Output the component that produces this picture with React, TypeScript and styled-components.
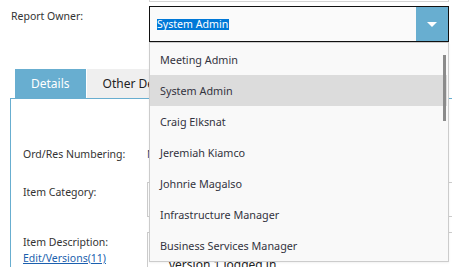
import styled, { createGlobalStyle } from 'styled-components';

const GlobalStyle = createGlobalStyle`
  html, body {
    margin: 0;
    padding: 0;
    overflow: hidden;
    background: #ffffff;
  }

  body {
    font-family: 'Noto Sans', 'Liberation Sans', sans-serif;
    font-size: 11px;
    color: #333333;
  }
`;

const owners = [
  'Meeting Admin',
  'System Admin',
  'Craig Elksnat',
  'Jeremiah Kiamco',
  'Johnrie Magalso',
  'Infrastructure Manager',
  'Business Services Manager',
];

const tabs = ['Details', 'Other Details', 'Attachments', 'History'];

const App = () => {
  const selected = 'System Admin';

  return (
    <St.Page>
      <GlobalStyle />
      <St.Header>
        <St.FieldLabel>Report Owner:</St.FieldLabel>
        <St.SelectColumn>
          <St.PrevEdge />
          <St.Select>
            <St.SelectValue>
              <span>{selected}</span>
            </St.SelectValue>
            <St.ArrowButton type="button" aria-label="open" />
            <St.OptionList>
              {owners.map((name) => (
                <St.Option key={name} $active={name === selected}>
                  {name}
                </St.Option>
              ))}
              <St.ScrollThumb />
            </St.OptionList>
          </St.Select>
        </St.SelectColumn>
      </St.Header>

      <St.TabBar>
        {tabs.map((tab, i) => (
          <St.Tab key={tab} $active={i === 0}>
            {tab}
          </St.Tab>
        ))}
      </St.TabBar>

      <St.Panel>
        <St.FormGrid>
          <St.RowLabel>Ord/Res Numbering:</St.RowLabel>
          <St.PlainValue>Numbered automatically</St.PlainValue>

          <St.RowLabel>Item Category:</St.RowLabel>
          <St.InputBox />

          <St.RowLabel>
            Item Description:
            <St.EditLink href="#">Edit/Versions(11)</St.EditLink>
          </St.RowLabel>
          <St.EditorBox>version 1 logged in</St.EditorBox>
        </St.FormGrid>
      </St.Panel>
    </St.Page>
  );
};

export default App;

const St = {
  Page: styled.div`
    width: 452px;
    height: 267px;
    overflow: hidden;
  `,
  Header: styled.div`
    display: flex;
    padding-left: 11px;
  `,
  FieldLabel: styled.div`
    width: 138px;
    padding-top: 8px;
    line-height: 16px;
    font-size: 10.5px;
  `,
  SelectColumn: styled.div`
    display: flex;
    flex-direction: column;
    width: 300px;
  `,
  PrevEdge: styled.div`
    height: 2px;
    border: 1px solid #d4d4d4;
    border-top: none;
    box-sizing: border-box;
    margin-bottom: 4px;
  `,
  Select: styled.div`
    position: relative;
    display: flex;
    height: 36px;
    box-sizing: border-box;
    border: 1px solid #111111;
    background: #fafafa;
  `,
  SelectValue: styled.div`
    flex: 1;
    display: flex;
    align-items: center;
    padding-left: 7px;

    span {
      display: inline-block;
      line-height: 11px;
      padding: 0 1px 0 0;
      font-size: 10.6px;
      background: #0078d7;
      color: #ffffff;
    }
  `,
  ArrowButton: styled.button`
    position: relative;
    width: 32px;
    border: none;
    padding: 0;
    background: #68aed0;

    &::after {
      content: '';
      position: absolute;
      left: 11px;
      top: 15px;
      border-left: 5px solid transparent;
      border-right: 5px solid transparent;
      border-top: 5px solid #ffffff;
    }
  `,
  OptionList: styled.ul`
    position: absolute;
    top: calc(100% + 1px);
    left: -1px;
    z-index: 10;
    width: 300px;
    height: 220px;
    box-sizing: border-box;
    margin: 0;
    padding: 1px 0 0;
    list-style: none;
    background: #f9f9f9;
    border: 1px solid #cccccc;
    box-shadow: 0 1px 2px rgba(0, 0, 0, 0.06);
    overflow: hidden;
  `,
  Option: styled.li<{ $active: boolean }>`
    height: 31px;
    padding: 0 0 0 10px;
    margin-right: 1px;
    line-height: 31px;
    font-size: 10.8px;
    background: ${({ $active }) => ($active ? '#dcdcdc' : 'transparent')};
    color: #333340;
  `,
  ScrollThumb: styled.div`
    position: absolute;
    left: 293px;
    top: 12px;
    width: 3px;
    height: 66px;
    background: #8b8b8b;
  `,
  TabBar: styled.div`
    display: flex;
    gap: 1px;
    margin: 27px 0 0 15px;
  `,
  Tab: styled.div<{ $active: boolean }>`
    flex: none;
    height: 29px;
    padding: 0 16px;
    line-height: 29px;
    font-size: 12px;
    background: ${({ $active }) => ($active ? '#68aed0' : '#efefef')};
    color: ${({ $active }) => ($active ? '#ffffff' : '#222222')};
  `,
  Panel: styled.div`
    margin-left: 10px;
    width: 700px;
    height: 300px;
    border-top: 1px solid #68aed0;
    border-left: 1px solid #68aed0;
    padding: 47px 0 0 12px;
  `,
  FormGrid: styled.div`
    display: grid;
    grid-template-columns: 124px 1fr;
    grid-template-rows: 16px 35px auto;
    row-gap: 20px;
    line-height: 16px;
    font-size: 10.5px;

    & > :nth-child(5),
    & > :nth-child(6) {
      margin-top: -5px;
    }
  `,
  RowLabel: styled.div`
    display: flex;
    flex-direction: column;
    padding-top: 2px;

    &:first-child {
      padding-top: 0;
    }
  `,
  PlainValue: styled.div`
    color: #1f3f6f;
  `,
  InputBox: styled.div`
    height: 35px;
    box-sizing: border-box;
    border: 1px solid #cccccc;
    background: #ffffff;
  `,
  EditLink: styled.a`
    color: #1b5fae;
    text-decoration: underline;
  `,
  EditorBox: styled.div`
    height: 60px;
    border-top: 1px solid #cccccc;
    border-left: 1px solid #cccccc;
    padding: 24px 0 0 21px;
    font-size: 12px;
    color: #222222;
  `,
};
